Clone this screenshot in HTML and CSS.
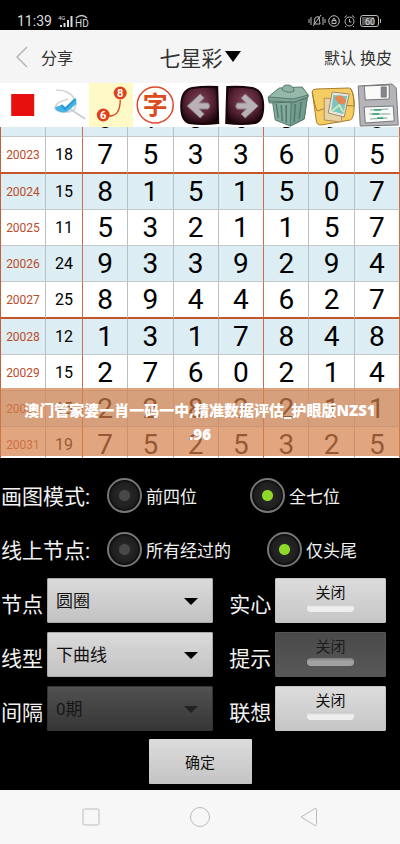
FILE: index.html
```html
<!DOCTYPE html>
<html lang="zh-CN">
<head>
<meta charset="UTF-8">
<meta name="viewport" content="width=device-width, initial-scale=1.0">
<title>七星彩</title>
<link rel="stylesheet" href="styles.css">
</head>
<body>

<div class="status">
  <span class="time">11:39</span>
  <svg class="signal" width="36" height="14" viewBox="0 0 36 14">
    <text x="5" y="6" class="tiny">4G</text>
    <path d="M8 13v-2M11.500 13V9M15 13V6M18.500 13V2" stroke="#ddd" stroke-width="2"/>
    <path d="M23 4q6-5 11 0" fill="none" stroke="#ccc" stroke-width="1.500"/>
    <text x="22" y="13" class="hd">HD</text>
  </svg>
  <svg class="state" width="74" height="14" viewBox="0 0 74 14" fill="none" stroke="#bbb">
    <path d="M1 5v4M3 3v8M15 3v8M17 5v4M6 10l1-6q2-2 4-1l1 7zM5 12L13 1"/>
    <circle cx="26" cy="7" r="5.300"/>
    <path d="M24 6.500h4v3h-4zM25 6V5q1-1.500 2 0v1"/>
    <circle cx="41.500" cy="7.500" r="4.500"/>
    <path d="M41.500 5v3h2M36.500 3.500l2.500-2M46.500 3.500L44 1.500M38 12l-1 1M45 12l1 1"/>
    <rect x="52.500" y="1.500" width="18" height="11" rx="2.500"/>
    <path d="M72.500 5v4"/>
    <rect x="54" y="3" width="12" height="8" fill="#555" stroke="none"/>
    <text x="57" y="10.500" class="battery">60</text>
  </svg>
</div>

<header class="header">
  <a class="back" href="#">
    <svg width="12" height="22" viewBox="0 0 12 22"><path d="M11 1L1 11l10 10" fill="none" stroke="#b4b4b4" stroke-width="1.500"/></svg>
    分享
  </a>
  <button class="title">七星彩<span class="arrow"></span></button>
  <div class="links"><a href="#">默认</a> <a href="#">换皮</a></div>
</header>

<nav class="toolbar">
  <button aria-label="颜色">
    <svg viewBox="0 0 44 44"><rect x="11" y="11" width="23" height="22" fill="#e80f0f"/></svg>
  </button>
  <button aria-label="画线">
    <svg viewBox="0 0 44 44" fill="none">
      <path d="M12 7q14 0 19 10 3 11-8 12-13 0-12-5 1-5 13-8" stroke="#d0d3d6" stroke-width="1.600"/>
      <path d="M26 26l15 10" stroke="#c8ccd0" stroke-width="1.600"/>
      <path d="M11 24l7-2 3 2 11-9v6l-8 7q-5 3-10 0-3-1-3-4z" fill="#46b4e2"/>
      <path d="M17 22l4 4 10-10" stroke="#2b9ad0" stroke-width="2"/>
    </svg>
  </button>
  <button class="active" aria-label="连线">
    <svg viewBox="0 0 44 44">
      <path d="M31 17q0 16-11 16" fill="none" stroke="#d8431b" stroke-width="1.300"/>
      <circle cx="31" cy="10" r="6.500" fill="#dd421b"/>
      <circle cx="14" cy="32" r="6.500" fill="#dd421b"/>
      <text x="31" y="14" class="node">8</text>
      <text x="14" y="36" class="node">6</text>
    </svg>
  </button>
  <button aria-label="文字">
    <svg viewBox="0 0 44 44">
      <circle cx="22" cy="22" r="18" fill="#fff" stroke="#dc4a2a" stroke-width="1.500"/>
      <text x="22" y="31" class="word">字</text>
    </svg>
  </button>
  <button aria-label="后退">
    <svg viewBox="0 0 44 44">
      <defs>
        <radialGradient id="wine" cx=".5" cy=".4" r=".65">
          <stop offset="0" stop-color="#83435a"/>
          <stop offset=".55" stop-color="#572335"/>
          <stop offset="1" stop-color="#170409"/>
        </radialGradient>
      </defs>
      <path d="M14 5q13-2 25-1l1 36q-16 2-29 0-8-2-8-17Q3 7 14 5z" fill="url(#wine)" stroke="#180409" stroke-width="2"/>
      <path d="M9 23l13-12 4 4-5 5h9q3 3 0 6h-9l5 5-4 4z" fill="#b9b1b5" stroke="#8b8086" stroke-linejoin="round"/>
    </svg>
  </button>
  <button aria-label="前进">
    <svg viewBox="0 0 44 44">
      <path d="M30 5Q17 3 5 4L4 40q16 2 29 0 8-2 8-17Q41 7 30 5z" fill="url(#wine)" stroke="#180409" stroke-width="2"/>
      <path d="M36 23L23 11l-4 4 5 5h-9q-3 3 0 6h9l-5 5 4 4z" fill="#b9b1b5" stroke="#8b8086" stroke-linejoin="round"/>
    </svg>
  </button>
  <button aria-label="清空">
    <svg viewBox="0 0 44 44" stroke="#58796d" stroke-linejoin="round">
      <path d="M5 17l3 20 15 6 14-7 3-22-16 5z" fill="#82aa9c"/>
      <path d="M24 20l-1 23 14-7 3-21z" fill="#739c8e"/>
      <path d="M1 14L12 5l23-1 6 8-14 7-25 1z" fill="#94b9ab"/>
      <path d="M1 14l1 4 25 1 14-5v-2l-15 4z" fill="#7ea797"/>
      <path d="M15 7q0-5 5-5 6 0 7 6-5 3-12-1z" fill="#8eb2a4"/>
      <path d="M9 21l2 14M14 22l1 16M19 22v18M28 21l-1 18M34 19l-2 17" fill="none" stroke="#55786b" stroke-width="1.500"/>
    </svg>
  </button>
  <button aria-label="相册">
    <svg viewBox="0 0 44 44" stroke-linejoin="round">
      <path d="M1 9q0-3 4-3l33-1q4 1 5 16 0 15-4 16l-29 5q-5 0-5-5z" fill="#f6cd62" stroke="#a97e2d"/>
      <path d="M1 9q3 16 5 19l9-3M29 22l14 1q0-13-4-18" fill="none" stroke="#aa7d33"/>
      <path d="M13 15v22l17 2 2-22z" fill="#e6d4a4" stroke="#b58e5c"/>
      <path d="M21 9l17 2-5 23-16-4z" fill="#eee6d7" stroke="#9b8b78"/>
      <path d="M22 12l14 1-4 18-12-3z" fill="#76c6c6"/>
      <path d="M23 15q7-6 12 3-2 5-7 3z" fill="#e58750"/>
      <path d="M21 28l7-6 4 7" fill="none" stroke="#cee6b2" stroke-width="2"/>
    </svg>
  </button>
  <button aria-label="保存">
    <svg viewBox="0 0 44 44" stroke="#77777c" stroke-linejoin="round">
      <path d="M2 3l34-2 4 4 2 37-38 1z" fill="#b4b4b9"/>
      <path d="M8 3l25-1v14l-24 1z" fill="#fafafa"/>
      <path d="M25 4h5v10h-5z" fill="#85858c"/>
      <path d="M8 24l29-1 1 15-29 2z" fill="#f7faf7"/>
      <path d="M14 27l18-1M13 31h21M14 36l17-1" stroke="#84a194"/>
      <path d="M18 27h7M16 31h7M21 35h6" stroke="#2ea07e" stroke-width="1.500"/>
    </svg>
  </button>
</nav>

<main class="chart">
  <table>
    <colgroup>
      <col class="col-issue"><col class="col-sum">
      <col><col><col><col><col><col><col>
    </colgroup>
    <tbody id="chartData"></tbody>
  </table>
  <div class="banner">澳门管家婆一肖一码一中,精准数据评估_护眼版NZS1<br>.96</div>
</main>

<form class="panel">
  <div class="options mode">
    <span class="name">画图模式:</span>
    <label><input type="radio" name="mode"><span>前四位</span></label>
    <label><input type="radio" name="mode" checked><span>全七位</span></label>
  </div>
  <div class="options nodes">
    <span class="name">线上节点:</span>
    <label><input type="radio" name="nodes"><span>所有经过的</span></label>
    <label><input type="radio" name="nodes" checked><span>仅头尾</span></label>
  </div>

  <div class="settings">
    <label class="name" for="shape">节点</label>
    <div class="select"><select id="shape"><option>圆圈</option></select></div>
    <label class="name right" for="solid">实心</label>
    <button type="button" class="toggle" id="solid">关闭<i></i></button>

    <label class="name" for="line">线型</label>
    <div class="select"><select id="line"><option>下曲线</option></select></div>
    <label class="name right" for="tip">提示</label>
    <button type="button" class="toggle" id="tip" disabled>关闭<i></i></button>

    <label class="name" for="gap">间隔</label>
    <div class="select disabled"><select id="gap" disabled><option>0期</option></select></div>
    <label class="name right" for="guess">联想</label>
    <button type="button" class="toggle" id="guess">关闭<i></i></button>
  </div>

  <button type="button" class="confirm">确定</button>
</form>

<footer class="keys">
  <button aria-label="最近任务"><svg width="22" height="22" viewBox="0 0 22 22"><rect x="3" y="3" width="16" height="16" rx="1.500"/></svg></button>
  <button aria-label="主页"><svg width="22" height="22" viewBox="0 0 22 22"><circle cx="11" cy="11" r="9.500"/></svg></button>
  <button aria-label="返回"><svg width="22" height="22" viewBox="0 0 22 22"><path d="M3 11L17 2.500q1.500-.5 1.500 1v15q0 1.500-1.500 1z"/></svg></button>
</footer>

<script src="script.js"></script>
</body>
</html>
```
FILE: styles.css
```css
* {
  box-sizing: border-box;
}
body {
  margin: 0;
  min-height: 100vh;
  display: flex;
  flex-direction: column;
  background-color: #f7f7f7;
  color: #333;
  font-family: Roboto, "Noto Sans CJK SC", sans-serif;
}
button {
  padding: 0;
  border: none;
  background: none;
  color: inherit;
  font-family: inherit;
  cursor: pointer;
}
a {
  color: inherit;
  text-decoration: none;
}

/* status bar */
.status {
  display: flex;
  align-items: center;
  height: 30px;
  padding: 12px 18px 0 17px;
  background-color: #000;
  color: #ddd;
}
.time {
  font-size: 14px;
  line-height: 18px;
}
.signal {
  margin-left: 1px;
}
.state {
  margin-left: auto;
}
.status text {
  fill: #ddd;
  stroke: none;
}
.tiny {
  font-size: 6px;
}
.hd {
  font-size: 10px;
}
.battery {
  font-size: 9px;
}

/* header */
.header {
  display: grid;
  grid-template-columns: 1fr auto 1fr;
  align-items: center;
  height: 53px;
  padding: 0 8px;
  background-color: #f5f5f5;
  font-size: 16px;
}
.back {
  display: flex;
  align-items: center;
  gap: 13px;
  padding-left: 8px;
}
.title {
  display: flex;
  align-items: center;
  gap: 2px;
  font-size: 21px;
}
.arrow {
  border: 8px solid transparent;
  border-top: 11px solid #000;
  border-bottom: 0;
}
.links {
  text-align: right;
}

/* toolbar */
.toolbar {
  display: grid;
  grid-template-columns: repeat(9, 1fr);
  height: 44px;
  background-color: #fff;
}
.toolbar svg {
  display: block;
  width: 100%;
  height: 44px;
}
.toolbar .active {
  background-color: #fff9c8;
}
.node {
  fill: #fff;
  font-size: 11px;
  font-weight: bold;
  text-anchor: middle;
}
.word {
  fill: #dc4a20;
  font-size: 25px;
  font-weight: bold;
  text-anchor: middle;
}

/* chart */
.chart {
  position: relative;
  display: flex;
  flex-direction: column;
  justify-content: flex-end;
  height: 331px;
  overflow: hidden;
  background-color: #fff;
}
table {
  flex: none;
  width: 100%;
  margin-bottom: -6px;
  table-layout: fixed;
  border-spacing: 0;
  border-left: 1px solid #c0603c;
  color: #000;
}
.col-issue {
  width: 45px;
}
.col-sum {
  width: 37px;
}
td {
  height: 36px;
  padding: 0;
  border-right: 1px solid #b9c0c2;
  border-bottom: 1px solid #c3c9cb;
  text-align: center;
  font-size: 28px;
  line-height: 32px;
}
tr:nth-child(odd) td {
  background-color: #dcedf3;
}
td.issue {
  color: #bd4c2a;
  font-size: 12px;
}
td.sum {
  font-size: 16px;
}
td.sum, td:nth-child(6), td:last-child {
  border-right-color: #c8704c;
}
tr.group td {
  height: 37px;
  border-bottom: 2px solid #c4562c;
}
.banner {
  position: absolute;
  left: 0;
  right: 0;
  bottom: 2px;
  height: 68px;
  padding-top: 10px;
  background-color: rgba(212, 127, 74, 0.7);
  color: #fff;
  font-family: "Noto Sans", "Noto Sans CJK SC", sans-serif;
  font-size: 15px;
  font-weight: 900;
  line-height: 24px;
  text-align: center;
}

/* drawing settings */
.panel {
  display: flex;
  flex-direction: column;
  padding: 10px 0 6px;
  background-color: #000;
  color: #f2f2f2;
}
.options {
  display: grid;
  align-items: center;
  height: 54px;
}
.mode {
  grid-template-columns: 107px 143px 1fr;
}
.nodes {
  grid-template-columns: 107px 160px 1fr;
}
.name {
  padding: 4px 0 0 1px;
  font-size: 21px;
  line-height: 28px;
}
.options label {
  display: flex;
  align-items: center;
  gap: 4px;
  font-size: 17px;
}
.options label span {
  padding-top: 4px;
  line-height: 24px;
}
input[type="radio"] {
  appearance: none;
  width: 35px;
  height: 35px;
  margin: 0;
  border: 2px solid #777;
  border-radius: 50%;
  background: radial-gradient(circle, #484848 5px, #262626 6px, #1e1e1e 13px, #0c0c0c 15px);
}
input[type="radio"]:checked {
  background: radial-gradient(circle, #8ed927 5px, #262626 6px, #1e1e1e 13px, #0c0c0c 15px);
}
.settings {
  display: grid;
  grid-template-columns: 47px 3fr 62px 2fr;
  gap: 9px 0;
  align-items: center;
  margin-top: 2px;
  padding-right: 14px;
}
.settings .name {
  padding-top: 8px;
}
.settings .name.right {
  padding-left: 16px;
}
.select {
  position: relative;
}
.select::after {
  content: "";
  position: absolute;
  top: 20px;
  right: 15px;
  border: 7px solid transparent;
  border-top-color: #000;
  border-bottom: 0;
  pointer-events: none;
}
select {
  appearance: none;
  display: block;
  width: 100%;
  height: 45px;
  padding: 0 8px;
  border: 1px solid #aaa;
  border-radius: 1px;
  background: linear-gradient(#dadada, #c2c2c2);
  color: #111;
  font-family: inherit;
  font-size: 17px;
}
.select.disabled::after {
  border-top-color: #222;
}
select:disabled {
  border-color: #333;
  background: linear-gradient(#515151, #363636);
  color: #161616;
  opacity: 1;
}
.toggle {
  display: flex;
  flex-direction: column;
  align-items: center;
  height: 45px;
  padding-top: 4px;
  border: 1px solid #c4c4c4;
  border-radius: 1px;
  background: linear-gradient(#dcdcdc, #c6c6c6);
  color: #111;
  font-size: 15px;
  line-height: 20px;
}
.toggle i {
  width: 47px;
  height: 8px;
  margin-top: 1px;
  border-radius: 4px;
  background: linear-gradient(#c4c4c4, #eee 40%);
}
.toggle:disabled {
  border-color: #555;
  background: linear-gradient(#4a4a4a, #585858);
  color: #1c1c1c;
}
.toggle:disabled i {
  background: linear-gradient(#7c7c7c, #a2a2a2 40%);
}
.confirm {
  align-self: center;
  width: 103px;
  height: 45px;
  margin-top: 8px;
  border-radius: 1px;
  background: linear-gradient(#dcdcdc, #c4c4c4);
  color: #111;
  font-size: 15px;
}

/* navigation keys */
.keys {
  flex: 1;
  display: flex;
  align-items: center;
  justify-content: center;
  gap: 87px;
  min-height: 53px;
}
.keys svg {
  display: block;
  fill: none;
  stroke: #bbb;
}
```
FILE: script.js
```js
// issue, sum, seven numbers
const draws = [
  ['20022', 17, '8136398'],
  ['20023', 18, '7533605'],
  ['20024', 15, '8151507'],
  ['20025', 11, '5321157'],
  ['20026', 24, '9339294'],
  ['20027', 25, '8944627'],
  ['20028', 12, '1317848'],
  ['20029', 15, '2760214'],
  ['20030', 15, '2283211'],
  ['20031', 19, '7525325']
];
const groupEnds = ['20023', '20027', '20031'];

const chartData = document.getElementById('chartData');
draws.forEach(([issue, sum, numbers]) => {
  const row = document.createElement('tr');
  if (groupEnds.includes(issue)) row.className = 'group';
  row.innerHTML = `<td class="issue">${issue}</td><td class="sum">${sum}</td>` +
    [...numbers].map(n => `<td>${n}</td>`).join('');
  chartData.appendChild(row);
});
```
